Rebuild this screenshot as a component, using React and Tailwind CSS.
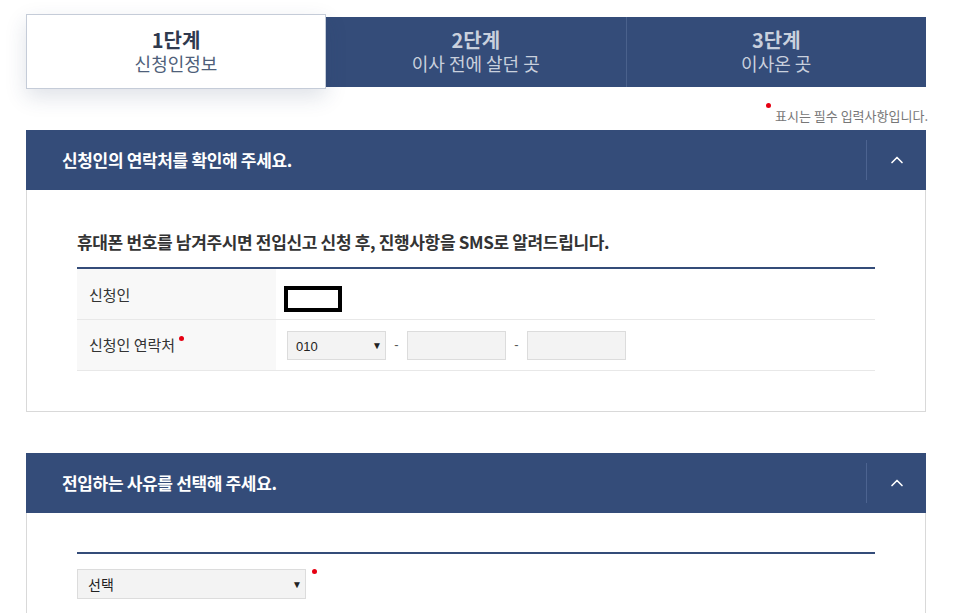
import { ChevronUp } from 'lucide-react';

const font = { fontFamily: '"Noto Sans CJK KR", "Noto Sans", sans-serif' };

function Steps() {
  const steps = [
    { n: '1단계', t: '신청인정보' },
    { n: '2단계', t: '이사 전에 살던 곳' },
    { n: '3단계', t: '이사온 곳' },
  ];
  return (
    <div className="flex h-[70px] mt-[17px]">
      {steps.map((s, i) =>
        i === 0 ? (
          <div key={i} className="relative z-10 -mt-[3px] h-[75px] w-[300px] flex flex-col items-center justify-center bg-white border border-[#c5ccd8] shadow-[0_8px_20px_rgba(40,60,100,0.15)]">
            <div className="text-[20px] leading-[23px] font-bold text-[#2f3a4f]">{s.n}</div>
            <div className="text-[18px] leading-[24px] text-[#4f5f7a]">{s.t}</div>
          </div>
        ) : (
          <div key={i} className={`flex-1 flex flex-col items-center justify-center bg-[#344c79] pb-[2px] ${i === 2 ? 'border-l border-[#4a618c]' : ''}`}>
            <div className="text-[20px] leading-[23px] font-bold text-[#c9d0dd]">{s.n}</div>
            <div className="text-[18px] leading-[24px] text-[#c9d0dd]">{s.t}</div>
          </div>
        )
      )}
    </div>
  );
}

function SectionHeader({ title }) {
  return (
    <div className="flex items-center h-[60px] bg-[#344c79]">
      <div className="flex-1 pl-[36px] text-[17px] font-bold tracking-[-0.02em] text-white">{title}</div>
      <div className="w-px h-[40px] bg-[#4c6390]" />
      <div className="w-[59px] flex items-center justify-center">
        <ChevronUp size={20} strokeWidth={2} className="text-white" />
      </div>
    </div>
  );
}

function RedDot({ className = '' }) {
  return <span className={`inline-block w-[5px] h-[5px] rounded-full bg-[#e60012] ${className}`} />;
}

export default function App() {
  return (
    <div className="w-[961px] h-[613px] overflow-hidden bg-white" style={font}>
      <div className="ml-[26px] w-[900px]">
        <Steps />

        <div className="mt-[16px] flex justify-end items-start text-[13px] leading-[18px] text-[#777] -mr-[2px]">
          <RedDot className="mr-[4px]" />
          <span className="mt-[4px]">표시는 필수 입력사항입니다.</span>
        </div>

        <div className="mt-[5px]">
          <SectionHeader title="신청인의 연락처를 확인해 주세요." />
          <div className="border border-t-0 border-[#d9d9d9] px-[50px] pt-[40px] pb-[40px]">
            <div className="text-[17px] leading-[24px] font-bold text-[#333] tracking-[-0.02em]">
              휴대폰 번호를 남겨주시면 전입신고 신청 후, 진행사항을 SMS로 알려드립니다.
            </div>
            <div className="mt-[13px] border-t-2 border-[#344c79]">
              <div className="flex h-[51px] border-b border-[#e8e8e8]">
                <div className="w-[199px] bg-[#f8f8f8] flex items-center pl-[12px] pt-[2px] text-[15px] text-[#333]">신청인</div>
                <div className="flex-1 flex items-center pl-[8px]">
                  <div className="w-[58px] h-[26px] border-[4px] border-black bg-white mt-[10px]" />
                </div>
              </div>
              <div className="flex h-[51px] border-b border-[#e8e8e8]">
                <div className="w-[199px] bg-[#f8f8f8] flex items-center pl-[12px] text-[15px] text-[#333]">
                  신청인 연락처
                  <RedDot className="-mt-[14px] ml-[4px]" />
                </div>
                <div className="flex-1 flex items-center pl-[11px] text-[13px] text-[#555]" style={{ fontFamily: '"Liberation Sans", sans-serif' }}>
                  <div className="w-[99px] h-[29px] bg-[#f3f3f3] border border-[#dcdcdc] flex items-center justify-between pl-[8px] pr-[3px] text-[#222]">
                    <span className="mt-[3px]">010</span>
                    <span className="text-[10px]">▼</span>
                  </div>
                  <span className="w-[21px] text-center">-</span>
                  <div className="w-[99px] h-[29px] bg-[#f3f3f3] border border-[#dcdcdc]" />
                  <span className="w-[21px] text-center">-</span>
                  <div className="w-[99px] h-[29px] bg-[#f3f3f3] border border-[#dcdcdc]" />
                </div>
              </div>
            </div>
          </div>
        </div>

        <div className="mt-[41px]">
          <SectionHeader title="전입하는 사유를 선택해 주세요." />
          <div className="border border-t-0 border-[#d9d9d9] px-[50px] pt-[39px] pb-[40px]">
            <div className="border-t-2 border-[#344c79]" />
            <div className="flex items-start mt-[15px]">
              <div className="w-[229px] h-[30px] bg-[#f3f3f3] border border-[#dcdcdc] flex items-center justify-between pl-[10px] pr-[3px] text-[14px] text-[#222]">
                <span>선택</span>
                <span className="text-[10px]" style={{ fontFamily: '"Liberation Sans", sans-serif' }}>▼</span>
              </div>
              <RedDot className="ml-[6px]" />
            </div>
          </div>
        </div>
      </div>
    </div>
  );
}
